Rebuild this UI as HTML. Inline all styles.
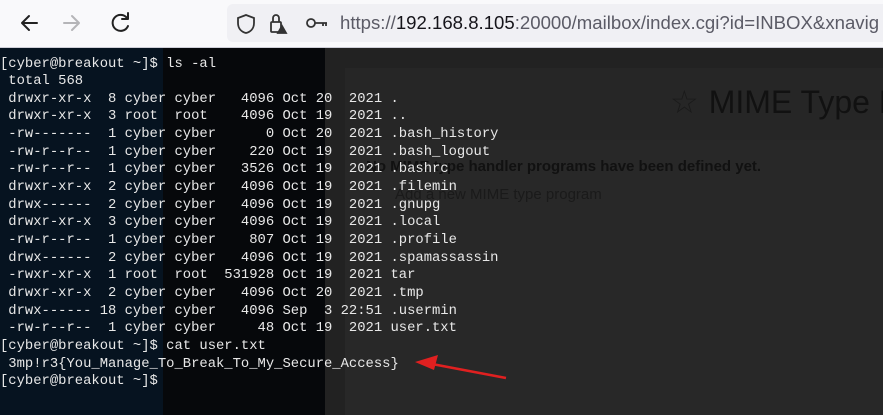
<!DOCTYPE html>
<html><head><meta charset="utf-8"><style>
body{margin:0;width:883px;height:415px;overflow:hidden;background:#2a2a2a;position:relative;font-family:"Liberation Sans",sans-serif}
.bar{position:absolute;left:0;top:0;width:883px;height:47px;background:#f9f9fb;border-bottom:1px solid #cfcfd8}
.url{position:absolute;left:227px;top:4px;width:670px;height:38px;background:#f0f0f4;border-radius:6px}
.urltext{position:absolute;left:340px;top:12px;font-size:18.6px;color:#5b5b66;white-space:nowrap}
.urltext b{font-weight:normal;color:#15141a}
.p1{position:absolute;left:0;top:48px;width:163px;height:367px;background:#061320}
.p2{position:absolute;left:163px;top:48px;width:162px;height:367px;background:#06080b}
.p3{position:absolute;left:325px;top:48px;width:558px;height:367px;background:#222}
.card{position:absolute;left:345px;top:68px;width:538px;height:347px;background:#282828}
.hdr{position:absolute;left:345px;top:68px;width:538px;height:72px;background:#262626}
.title{position:absolute;left:670px;top:83px;font-size:32px;color:#111;white-space:nowrap}
.ghost{position:absolute;color:#1a1a1a;font-size:15px;white-space:nowrap}
pre{position:absolute;left:0;top:55.5px;margin:0;font-family:"Liberation Mono",monospace;font-size:13.85px;line-height:17.65px;color:#e8e8e8}
</style></head><body>
<div class="bar">
<svg width="230" height="47" style="position:absolute;left:0;top:0" fill="none" stroke-width="2" stroke-linecap="round" stroke-linejoin="round">
<path d="M37 23H22M29 16l-7 7 7 7" stroke="#222"/>
<path d="M64 23h15M72 16l7 7-7 7" stroke="#b5b5b8"/>
<path d="M127 18a8 8 0 1 0 1 8M128 13v6h-6" stroke="#222"/>
</svg>
</div>
<div class="url">
<svg width="110" height="38" fill="none" stroke="#333" stroke-width="1.8">
<path d="M19 11l8 3v5c0 6-4 9-8 10-4-1-8-4-8-10v-5z"/>
<rect x="44" y="18" width="10" height="10" rx="1"/><path d="M46 18v-4a3 3 0 0 1 6 0v4"/>
<path d="M55 22l4 7h-8z" fill="#333"/>
<circle cx="84" cy="19" r="4"/><path d="M88 19h12M96 19v3M99 19v3"/>
</svg>
</div>
<div class="urltext">https://<b>192.168.8.105</b>:20000/mailbox/index.cgi?id=INBOX&amp;xnavig</div>
<div class="p1"></div><div class="p2"></div><div class="p3"></div>
<div class="card"></div><div class="hdr"></div>
<div class="title"><span style="color:#1a1a1a">☆</span><span style="margin-left:10px">MIME Type P</span></div>
<div class="ghost" style="left:366px;top:158px;color:#111;font-weight:bold">No MIME type handler programs have been defined yet.</div>
<div class="ghost" style="left:395px;top:186px">Add a new MIME type program</div>
<pre>[cyber@breakout ~]$ ls -al
 total 568
 drwxr-xr-x  8 cyber cyber   4096 Oct 20  2021 .
 drwxr-xr-x  3 root  root    4096 Oct 19  2021 ..
 -rw-------  1 cyber cyber      0 Oct 20  2021 .bash_history
 -rw-r--r--  1 cyber cyber    220 Oct 19  2021 .bash_logout
 -rw-r--r--  1 cyber cyber   3526 Oct 19  2021 .bashrc
 drwxr-xr-x  2 cyber cyber   4096 Oct 19  2021 .filemin
 drwx------  2 cyber cyber   4096 Oct 19  2021 .gnupg
 drwxr-xr-x  3 cyber cyber   4096 Oct 19  2021 .local
 -rw-r--r--  1 cyber cyber    807 Oct 19  2021 .profile
 drwx------  2 cyber cyber   4096 Oct 19  2021 .spamassassin
 -rwxr-xr-x  1 root  root  531928 Oct 19  2021 tar
 drwxr-xr-x  2 cyber cyber   4096 Oct 20  2021 .tmp
 drwx------ 18 cyber cyber   4096 Sep  3 22:51 .usermin
 -rw-r--r--  1 cyber cyber     48 Oct 19  2021 user.txt
[cyber@breakout ~]$ cat user.txt
 3mp!r3{You_Manage_To_Break_To_My_Secure_Access}
[cyber@breakout ~]$</pre>
<svg width="883" height="415" style="position:absolute;left:0;top:0">
<path d="M506 378L432 364" stroke="#e02020" stroke-width="2.5"/>
<path d="M415 362L438 355L434 370Z" fill="#e02020"/>
</svg>
</body></html>
